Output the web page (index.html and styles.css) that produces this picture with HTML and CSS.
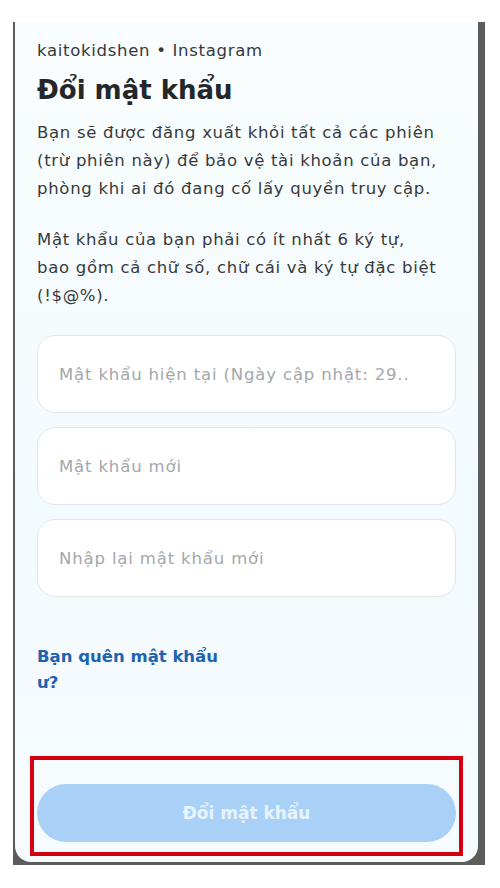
FILE: index.html
```html
<!DOCTYPE html>
<html>
	<head>
		<meta charset="UTF-8">
		<title>Đổi mật khẩu</title>
		<link rel="stylesheet" href="styles.css">
	</head>
	<body>
		<div class="frame">
			<div class="screen">
				<div class="account">kaitokidshen • Instagram</div>
				<h1 class="title">Đổi mật khẩu</h1>
				<p class="desc">Bạn sẽ được đăng xuất khỏi tất cả các phiên (trừ phiên này) để bảo vệ tài khoản của bạn, phòng khi ai đó đang cố lấy quyền truy cập.</p>
				<p class="desc">Mật khẩu của bạn phải có ít nhất 6 ký tự, bao gồm cả chữ số, chữ cái và ký tự đặc biệt (!$@%).</p>
				<div class="fields">
					<div class="field">Mật khẩu hiện tại (Ngày cập nhật: 29..</div>
					<div class="field">Mật khẩu mới</div>
					<div class="field">Nhập lại mật khẩu mới</div>
				</div>
				<a href="javascript:;" class="forgot">Bạn quên mật khẩu ư?</a>
				<!--khung đỏ đánh dấu nút-->
				<div class="mark">
					<a href="javascript:;" class="submit">Đổi mật khẩu</a>
				</div>
			</div>
		</div>
	</body>
</html>
```

FILE: styles.css
```css
*{
	margin: 0;
	padding: 0;
	box-sizing: border-box;
}
body{
	background: #fff;
	font-family: "DejaVu Sans", "Noto Sans", sans-serif;
	color: #2b2f33;
}
.frame{
	width: 472px;
	height: 843px;
	margin: 22px 0 0 13px;
	padding: 0 7px 3px 2px;
	background: #5c5c5c;
}
.screen{
	height: 100%;
	background: linear-gradient(180deg, #f9fdfe 0%, #f3fafd 60%, #f6fbfe 100%);
	border-radius: 0 0 16px 16px;
	padding: 17px 22px 0 22px;
	display: flex;
	flex-direction: column;
}
.account{
	font-size: 16.5px;
	line-height: 24px;
	letter-spacing: 0.7px;
	color: #34383c;
}
.title{
	font-size: 26px;
	font-weight: 700;
	line-height: 36px;
	margin-top: 9px;
	color: #23272a;
}
/*chiều rộng chữ nhỏ hơn ô nhập, để dòng xuống giống ảnh*/
.desc{
	max-width: 405px;
	font-size: 16.5px;
	line-height: 28px;
	letter-spacing: 0.7px;
	margin-top: 11px;
	color: #373a3d;
}
.desc + .desc{
	margin-top: 23px;
}
.fields{
	display: flex;
	flex-direction: column;
	gap: 14px;
	margin-top: 25px;
}
.field{
	height: 78px;
	border: 1px solid #e1e5e9;
	border-radius: 18px;
	background: #fff;
	padding: 0 21px;
	display: flex;
	align-items: center;
	font-size: 16.5px;
	letter-spacing: 0.85px;
	color: #a3a7ab;
	white-space: nowrap;
	overflow: hidden;
}
.forgot{
	width: 200px;
	margin-top: 47px;
	font-size: 16.5px;
	line-height: 26px;
	font-weight: 700;
	color: #1f62b0;
	text-decoration: none;
}
.mark{
	margin: auto -7px 6px -7px;
	border: 4px solid #d4000f;
	padding: 24px 3px 10px 3px;
}
.submit{
	display: block;
	height: 58px;
	border-radius: 29px;
	background: #a9d1f8;
	color: #e8f3fe;
	font-size: 17px;
	font-weight: 700;
	line-height: 58px;
	text-align: center;
	text-decoration: none;
}
```
